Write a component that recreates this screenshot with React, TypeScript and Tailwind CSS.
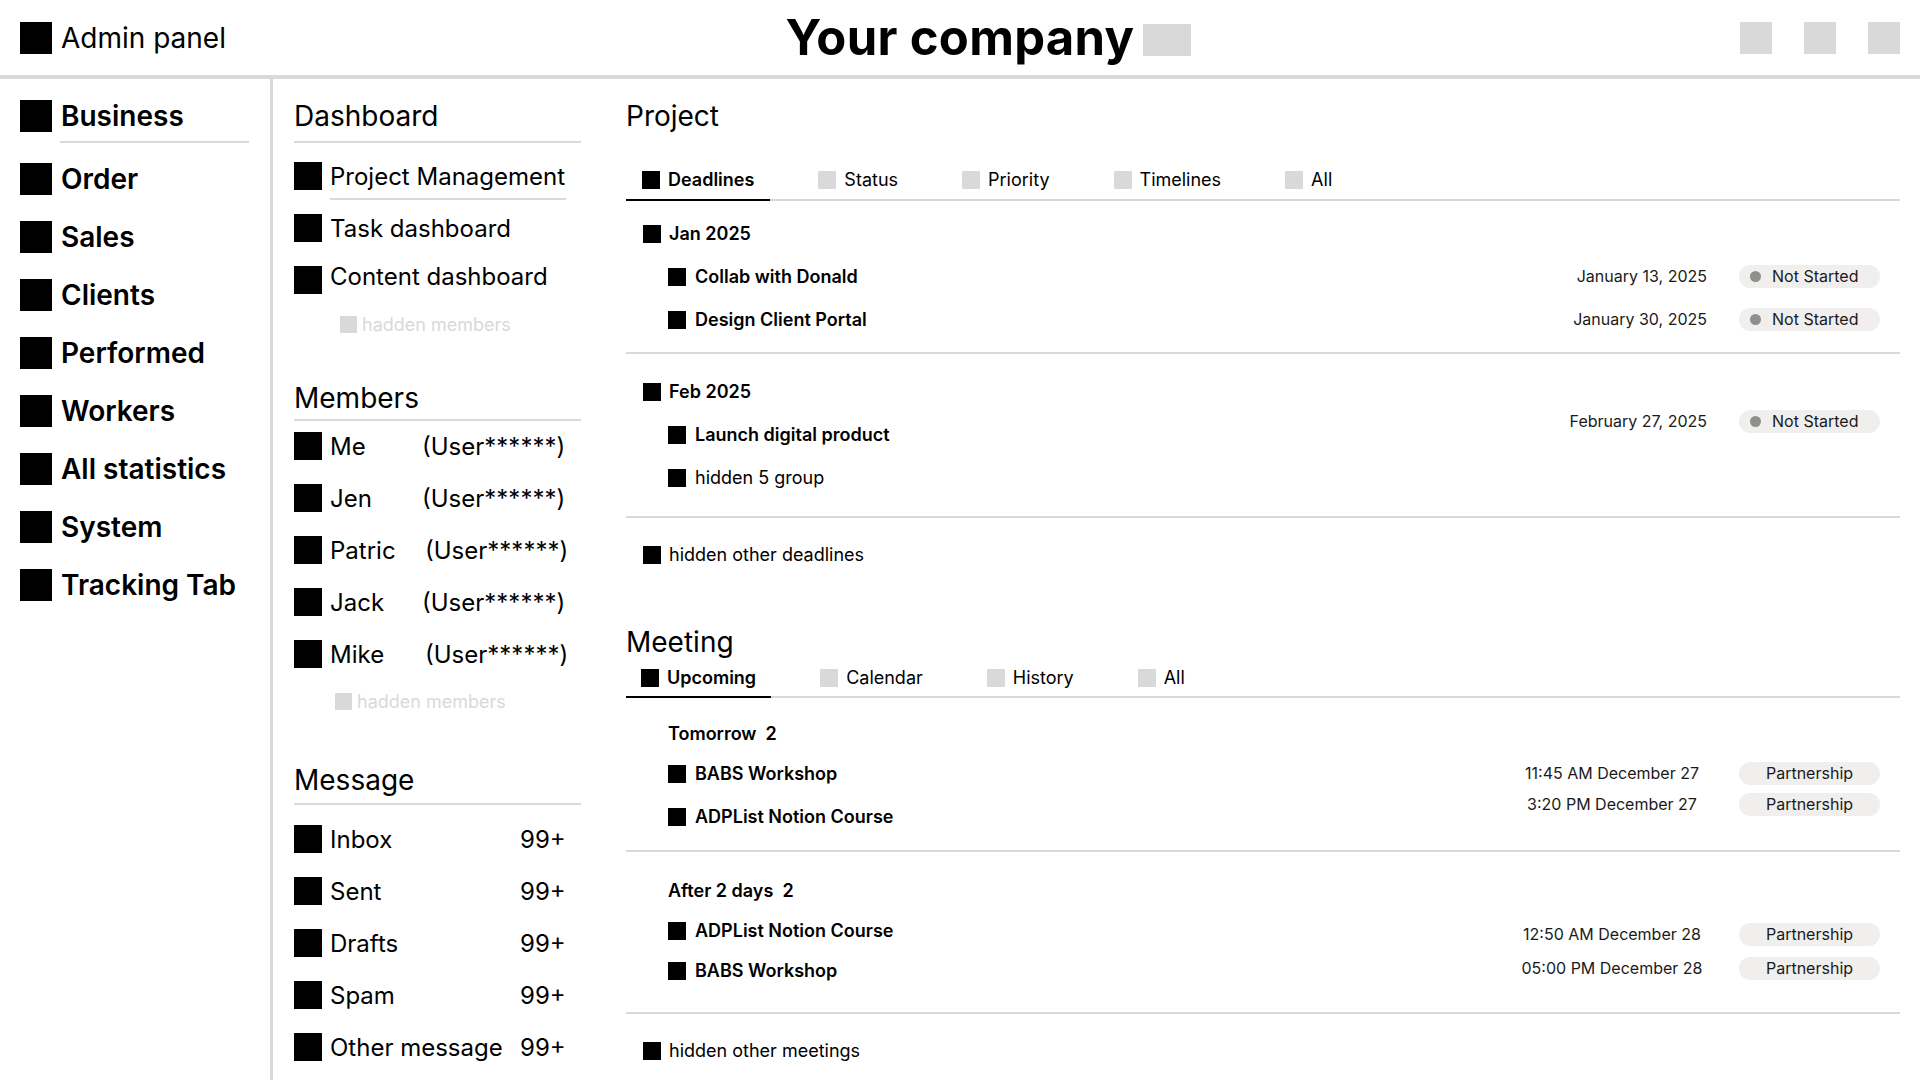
import React from "react";

const Sq = ({ c = "w-[18px] h-[18px] bg-black" }: { c?: string }) => <div className={"shrink-0 " + c} />;

const NotStarted = () => (
  <div className="flex items-center h-[23px] w-[141px] rounded-full bg-[#f0efee] pl-[11px] gap-[11px] text-[16px] leading-[23px] text-[#1a1a1a]">
    <div className="w-[11px] h-[11px] rounded-full bg-[#8f8f8d]" />
    <span>Not Started</span>
  </div>
);

const Partnership = () => (
  <div className="flex items-center justify-center h-[23px] w-[141px] rounded-full bg-[#f0efee] text-[16px] leading-[23px] text-[#1a1a1a]">
    Partnership
  </div>
);

const DateRow = ({ date }: { date: string }) => (
  <div className="flex items-center h-[23px]">
    <div className="w-[200px] text-right text-[16px] leading-[23px] text-[#1a1a1a]">{date}</div>
    <div className="ml-[32px]">
      <NotStarted />
    </div>
  </div>
);

const TimeRow = ({ time }: { time: string }) => (
  <div className="flex items-center h-[23px]">
    <div className="w-[200px] text-center text-[16px] leading-[23px] text-[#1a1a1a]">{time}</div>
    <div className="ml-[27px]">
      <Partnership />
    </div>
  </div>
);

const SubItem = ({ label, bold = true, className = "" }: { label: string; bold?: boolean; className?: string }) => (
  <div className={"flex items-center gap-[9px] h-[23px] pl-[42px] " + className}>
    <Sq />
    <span className={"text-[18px] leading-[22px] " + (bold ? "font-semibold" : "font-normal")}>{label}</span>
  </div>
);

const Tab = ({ label, active, px }: { label: string; active?: boolean; px: string }) => (
  <div className={"relative flex items-center gap-2 h-full " + px}>
    <Sq c={active ? "w-[18px] h-[18px] bg-black" : "w-[18px] h-[18px] bg-[#d9d9d9]"} />
    <span className={"text-[18px] leading-[22px] " + (active ? "font-semibold" : "font-normal")}>{label}</span>
    {active && <div className="absolute left-0 right-0 -bottom-[2px] h-[2px] bg-black" />}
  </div>
);

const sideItems = ["Order", "Sales", "Clients", "Performed", "Workers", "All statistics", "System", "Tracking Tab"];

const members: { n: string; w: string }[] = [
  { n: "Me", w: "w-[92px]" },
  { n: "Jen", w: "w-[92px]" },
  { n: "Patric", w: "w-[95px]" },
  { n: "Jack", w: "w-[92px]" },
  { n: "Mike", w: "w-[95px]" },
];

const messages = ["Inbox", "Sent", "Drafts", "Spam", "Other message"];

export default function App() {
  return (
    <div className="w-[1920px] h-[1080px] overflow-hidden bg-white text-black font-['Inter','Noto_Sans',sans-serif]">
      {/* Header */}
      <header className="h-[79px] border-b-4 border-[#d9d9d9] grid grid-cols-[1fr_auto_1fr] items-center px-5">
        <div className="flex items-center gap-[9px]">
          <Sq c="w-8 h-8 bg-black" />
          <span className="text-[28px] leading-[34px]">Admin panel</span>
        </div>
        <div className="relative">
          <h1 className="text-[49px] font-bold leading-[58px] tracking-[0.3px]">Your company</h1>
          <div className="absolute left-full top-1/2 -translate-y-1/2 mt-[2px] ml-[9px] w-12 h-8 bg-[#d9d9d9]" />
        </div>
        <div className="flex justify-end gap-8">
          <Sq c="w-8 h-8 bg-[#d9d9d9]" />
          <Sq c="w-8 h-8 bg-[#d9d9d9]" />
          <Sq c="w-8 h-8 bg-[#d9d9d9]" />
        </div>
      </header>

      <div className="flex h-[1001px]">
        {/* Sidebar */}
        <aside className="w-[273px] shrink-0 border-r-[3px] border-[#d9d9d9] pl-5 pt-[21px]">
          <div className="flex items-center gap-[9px] h-8">
            <Sq c="w-8 h-8 bg-black" />
            <span className="text-[28px] font-semibold leading-[34px]">Business</span>
          </div>
          <div className="ml-[40px] mt-[9px] h-[2px] w-[189px] bg-[#d9d9d9]" />
          {sideItems.map((s, i) => (
            <div key={s} className={"flex items-center gap-[9px] h-8 " + (i === 0 ? "mt-[20px]" : "mt-[26px]")}>
              <Sq c="w-8 h-8 bg-black" />
              <span className="text-[28px] font-semibold leading-[34px]">{s}</span>
            </div>
          ))}
        </aside>

        {/* Dashboard column */}
        <section className="w-[353px] shrink-0 pl-[21px] pr-[45px] pt-[20px]">
          <h2 className="text-[28px] leading-[34px]">Dashboard</h2>
          <div className="mt-[8px] h-[2px] bg-[#d9d9d9]" />
          <div className="mt-[19px] flex items-center gap-2 h-7">
            <Sq c="w-7 h-7 bg-black" />
            <span className="text-[24px] leading-[29px]">Project Management</span>
          </div>
          <div className="ml-[36px] mt-[8px] w-[236px] h-[2px] bg-[#d9d9d9]" />
          <div className="mt-[14px] flex items-center gap-2 h-7">
            <Sq c="w-7 h-7 bg-black" />
            <span className="text-[24px] leading-[29px]">Task dashboard</span>
          </div>
          <div className="mt-[24px] flex items-center gap-2 h-7">
            <Sq c="w-7 h-7 bg-black" />
            <span className="text-[24px] leading-[29px] pb-[7px]">Content dashboard</span>
          </div>
          <div className="mt-[22px] pl-[46px] flex items-center gap-[5px] h-[17px]">
            <Sq c="w-[17px] h-[17px] bg-[#d9d9d9]" />
            <span className="text-[18px] leading-[22px] text-[#d9d9d9]">hadden members</span>
          </div>

          <h2 className="mt-[48px] text-[28px] leading-[34px]">Members</h2>
          <div className="mt-[4px] h-[2px] bg-[#d9d9d9]" />
          {members.map((m, i) => (
            <div key={m.n} className={"flex items-center h-7 " + (i === 0 ? "mt-[11px]" : "mt-6")}>
              <Sq c="w-7 h-7 bg-black" />
              <span className={"ml-2 text-[24px] leading-[29px] " + m.w}>{m.n}</span>
              <span className="text-[24px] leading-[29px]">(User******)</span>
            </div>
          ))}
          <div className="mt-[25px] pl-[41px] flex items-center gap-[5px] h-[17px]">
            <Sq c="w-[17px] h-[17px] bg-[#d9d9d9]" />
            <span className="text-[18px] leading-[22px] text-[#d9d9d9]">hadden members</span>
          </div>

          <h2 className="mt-[53px] text-[28px] leading-[34px]">Message</h2>
          <div className="mt-[6px] h-[2px] bg-[#d9d9d9]" />
          {messages.map((m, i) => (
            <div key={m} className={"flex items-center h-7 " + (i === 0 ? "mt-[20px]" : "mt-6")}>
              <Sq c="w-7 h-7 bg-black" />
              <span className="ml-2 w-[190px] text-[24px] leading-[29px]">{m}</span>
              <span className="text-[24px] leading-[29px]">99+</span>
            </div>
          ))}
        </section>

        {/* Main */}
        <main className="flex-1 pr-5 pt-[20px]">
          <h2 className="text-[28px] leading-[34px]">Project</h2>
          <div className="mt-[28px] h-[40px] flex gap-8 border-b-2 border-[#d9d9d9]">
            <Tab label="Deadlines" active px="px-4" />
            <Tab label="Status" px="px-4" />
            <Tab label="Priority" px="px-4" />
            <Tab label="Timelines" px="px-4" />
            <Tab label="All" px="px-4" />
          </div>

          {/* Jan */}
          <div className="mt-[21px] flex justify-between">
            <div className="flex flex-col gap-5">
              <div className="flex items-center gap-2 h-[23px] pl-[17px]">
                <Sq />
                <span className="text-[18px] leading-[22px] font-semibold">Jan 2025</span>
              </div>
              <SubItem label="Collab with Donald" />
              <SubItem label="Design Client Portal" />
            </div>
            <div className="flex flex-col gap-5 pt-[43px] mr-5">
              <DateRow date="January 13, 2025" />
              <DateRow date="January 30, 2025" />
            </div>
          </div>
          <div className="mt-[21px] h-[2px] bg-[#d9d9d9]" />

          {/* Feb */}
          <div className="mt-[26px] flex justify-between">
            <div className="flex flex-col gap-5">
              <div className="flex items-center gap-2 h-[23px] pl-[17px]">
                <Sq />
                <span className="text-[18px] leading-[22px] font-semibold">Feb 2025</span>
              </div>
              <SubItem label="Launch digital product" />
              <SubItem label="hidden 5 group" bold={false} />
            </div>
            <div className="flex flex-col pt-[30px] mr-5">
              <DateRow date="February 27, 2025" />
            </div>
          </div>
          <div className="mt-[27px] h-[2px] bg-[#d9d9d9]" />

          <div className="mt-[25px] flex items-center gap-2 h-[23px] pl-[17px]">
            <Sq />
            <span className="text-[18px] leading-[22px]">hidden other deadlines</span>
          </div>

          {/* Meeting */}
          <h2 className="mt-[59px] text-[28px] leading-[34px]">Meeting</h2>
          <div className="mt-[1px] h-[38px] flex gap-[34px] border-b-2 border-[#d9d9d9]">
            <Tab label="Upcoming" active px="px-[15px]" />
            <Tab label="Calendar" px="px-[15px]" />
            <Tab label="History" px="px-[15px]" />
            <Tab label="All" px="px-[15px]" />
          </div>

          <div className="mt-[24px] flex justify-between">
            <div className="flex flex-col">
              <div className="flex items-center h-[23px] pl-[42px]">
                <span className="text-[18px] leading-[22px] font-semibold whitespace-pre">Tomorrow  2</span>
              </div>
              <SubItem label="BABS Workshop" className="mt-[17px]" />
              <SubItem label="ADPList Notion Course" className="mt-5" />
            </div>
            <div className="flex flex-col gap-[8px] pt-[40px] mr-5">
              <TimeRow time="11:45 AM December 27" />
              <TimeRow time="3:20 PM December 27" />
            </div>
          </div>
          <div className="mt-[22px] h-[2px] bg-[#d9d9d9]" />

          <div className="mt-[27px] flex justify-between">
            <div className="flex flex-col gap-[17px]">
              <div className="flex items-center h-[23px] pl-[42px]">
                <span className="text-[18px] leading-[22px] font-semibold whitespace-pre">After 2 days  2</span>
              </div>
              <SubItem label="ADPList Notion Course" />
              <SubItem label="BABS Workshop" />
            </div>
            <div className="flex flex-col gap-[11px] pt-[44px] mr-5">
              <TimeRow time="12:50 AM December 28" />
              <TimeRow time="05:00 PM December 28" />
            </div>
          </div>
          <div className="mt-[30px] h-[2px] bg-[#d9d9d9]" />

          <div className="mt-[25px] flex items-center gap-2 h-[23px] pl-[17px]">
            <Sq />
            <span className="text-[18px] leading-[22px]">hidden other meetings</span>
          </div>
        </main>
      </div>
    </div>
  );
}
